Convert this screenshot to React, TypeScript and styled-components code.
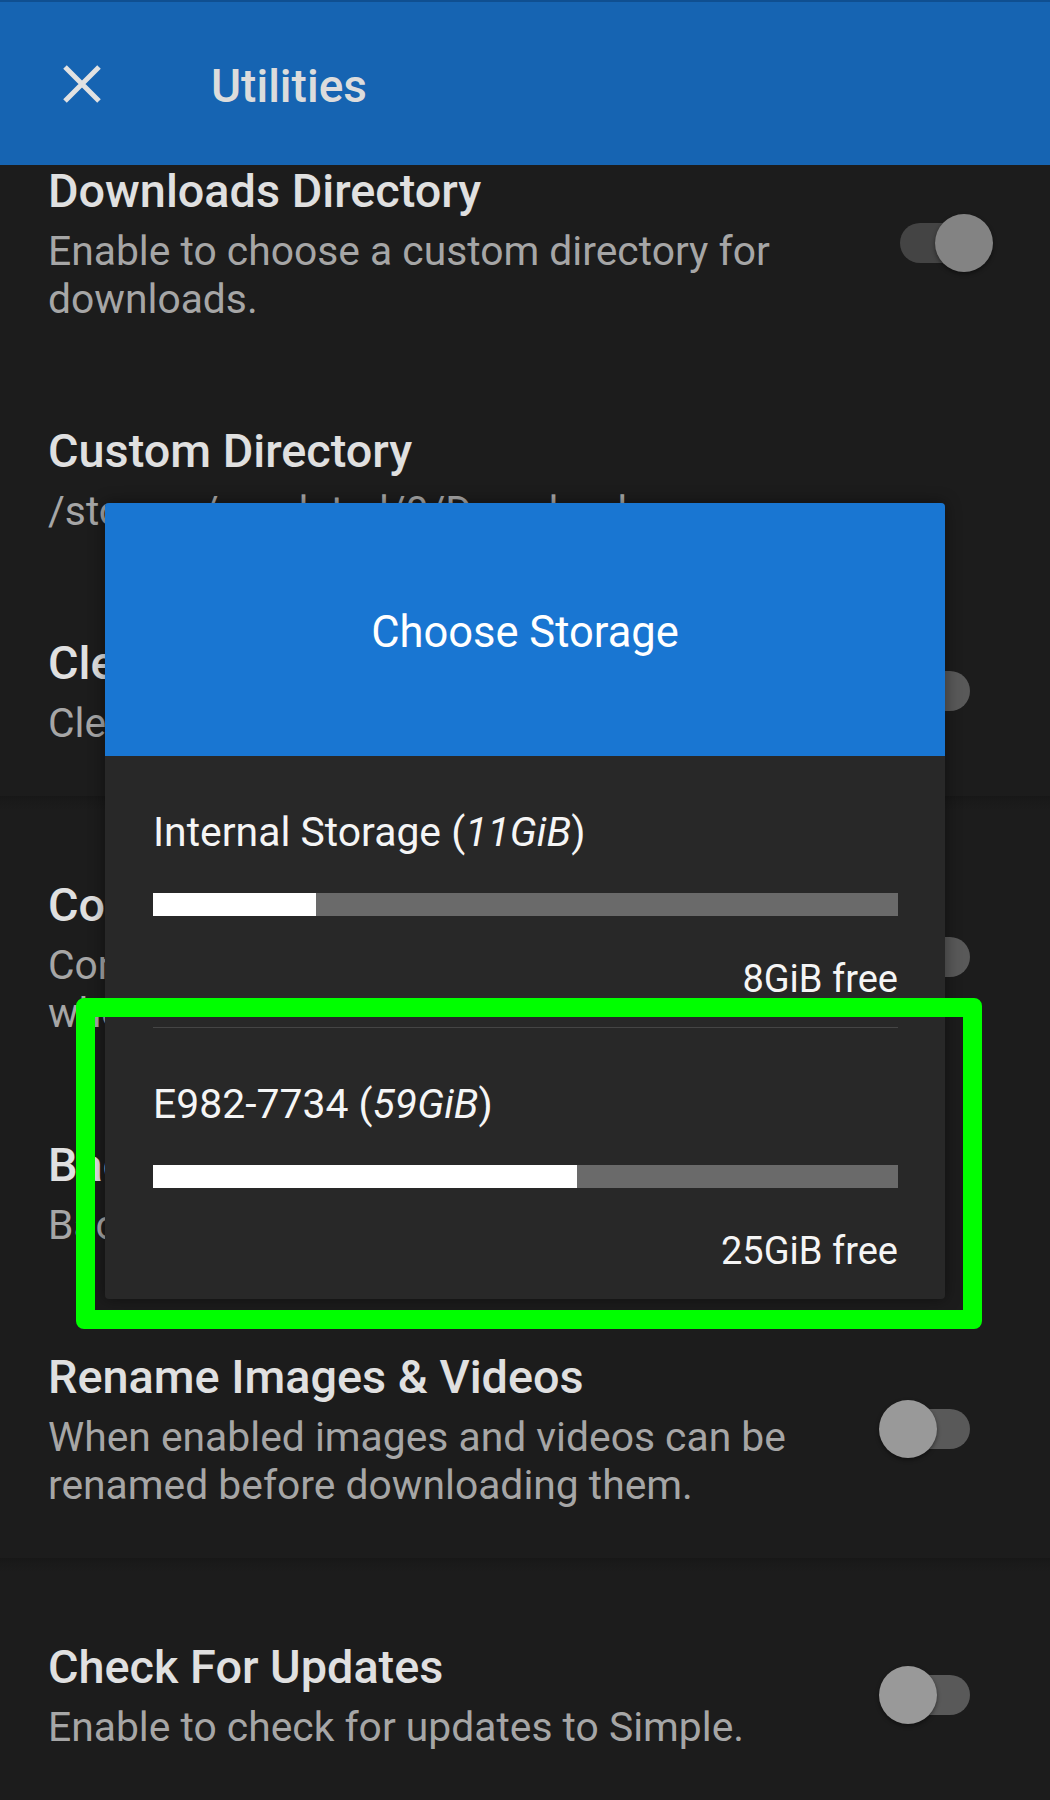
import React from "react";
import styled, { createGlobalStyle } from "styled-components";

const Global = createGlobalStyle`
  html, body { margin: 0; padding: 0; background: #1c1c1c; }
  body { font-family: Roboto, "Noto Sans", "Liberation Sans", sans-serif; }
  * { box-sizing: border-box; }
`;

const Screen = styled.div`
  position: relative;
  width: 1050px;
  height: 1800px;
  display: flex;
  flex-direction: column;
  overflow: hidden;
  background: #1c1c1c;
`;

const AppBar = styled.header`
  flex: none;
  height: 165px;
  border-top: 2px solid #0f4f91;
  background: #1664b2;
  display: flex;
  align-items: center;
  padding-left: 62px;
  gap: 109px;
`;

const CloseButton = styled.button`
  flex: none;
  width: 40px;
  height: 40px;
  padding: 0;
  border: 0;
  background: transparent;
  display: flex;
  color: #e2e2e2;
`;

const AppTitle = styled.h1`
  margin: 0;
  padding-top: 4px;
  font-size: 46px;
  font-weight: 500;
  line-height: 1;
  color: #dcdcdc;
`;

const ScrollArea = styled.main`
  flex: 1;
  overflow: hidden;
`;

const ScrollContent = styled.div`
  margin-top: -83px;
`;

const Section = styled.section`
  padding-top: 30px;
  background: #1c1c1c;
  & + & {
    background: linear-gradient(to bottom, #171717 0, #1a1a1a 6px, #1c1c1c 14px);
  }
`;

const Row = styled.div`
  display: flex;
  align-items: center;
  gap: 40px;
  padding: 50px 57px 49px 48px;
`;

const TextCol = styled.div`
  flex: 1;
  min-width: 0;
  padding-right: 154px;
  &:has(+ div) {
    padding-right: 0;
  }
`;

const RowTitle = styled.div`
  font-size: 46.8px;
  font-weight: 500;
  line-height: 58px;
  color: #e0e0e0;
  margin-bottom: 7px;
  white-space: nowrap;
`;

const RowDesc = styled.div`
  font-size: 40.8px;
  line-height: 48px;
  color: #a6a6a6;
  white-space: pre-line;
`;

const Switch = styled.div`
  flex: none;
  position: relative;
  width: 114px;
  height: 58px;
`;

const Track = styled.div<{ $on: boolean }>`
  position: absolute;
  left: 21px;
  top: 9px;
  width: 70px;
  height: 40px;
  border-radius: 20px;
  background: ${(p) => (p.$on ? "#444444" : "#595959")};
`;

const Knob = styled.div<{ $on: boolean }>`
  position: absolute;
  top: 0;
  left: ${(p) => (p.$on ? "56px" : "0")};
  width: 58px;
  height: 58px;
  border-radius: 50%;
  background: ${(p) => (p.$on ? "#838383" : "#999999")};
  box-shadow: 0 2px 4px rgba(0, 0, 0, 0.45);
`;

const Dialog = styled.div`
  position: absolute;
  left: 105px;
  top: 503px;
  width: 840px;
  border-radius: 4px;
  overflow: hidden;
  background: #282828;
  box-shadow: 0 0 16px rgba(0, 0, 0, 0.45);
`;

const DialogHeader = styled.div`
  height: 253px;
  padding-top: 7px;
  background: #1976d2;
  display: flex;
  align-items: center;
  justify-content: center;
  font-size: 43.5px;
  line-height: 1;
  color: #ffffff;
`;

const StorageItem = styled.div`
  height: 271px;
  padding: 52px 47px 0 48px;
  display: flex;
  flex-direction: column;
`;

const StorageName = styled.div`
  font-size: 40.9px;
  line-height: 48px;
  color: #f5f5f5;
  em { font-style: italic; }
`;

const Bar = styled.div`
  margin-top: 37px;
  height: 23px;
  background: #6a6a6a;
  display: flex;
`;

const BarFill = styled.div`
  height: 100%;
  background: #ffffff;
`;

const FreeText = styled.div`
  margin-top: 40px;
  font-size: 38px;
  line-height: 46px;
  text-align: right;
  color: #f5f5f5;
`;

const Divider = styled.div`
  height: 1px;
  margin: 0 47px 0 48px;
  background: #454545;
`;

const Highlight = styled.div`
  position: absolute;
  left: 76px;
  top: 998px;
  width: 906px;
  height: 331px;
  border: 19px solid #00ff00;
  border-radius: 8px;
  pointer-events: none;
`;

type Setting = { title: string; desc: string; toggle?: boolean; on?: boolean };

const sections: Setting[][] = [
  [
    {
      title: "Downloads Directory",
      desc: "Enable to choose a custom directory for downloads.",
      toggle: true,
      on: true,
    },
    { title: "Custom Directory", desc: "/storage/emulated/0/Download" },
    { title: "Clear Cache", desc: "Clear the cache on exit.", toggle: true },
  ],
  [
    {
      title: "Compress Media",
      desc: "Compress images and videos\nwhen downloading them.",
      toggle: true,
    },
    { title: "Backup Settings", desc: "Backup settings to a file." },
    {
      title: "Rename Images & Videos",
      desc: "When enabled images and videos can be renamed before downloading them.",
      toggle: true,
    },
  ],
  [
    {
      title: "Check For Updates",
      desc: "Enable to check for updates to Simple.",
      toggle: true,
    },
  ],
];

const storages = [
  { name: "Internal Storage", size: "11GiB", used: 21.9, free: "8GiB free" },
  { name: "E982-7734", size: "59GiB", used: 56.9, free: "25GiB free" },
];

function CloseIcon() {
  return (
    <svg width="40" height="40" viewBox="0 0 40 40" fill="none">
      <path d="M3 3 L37 37 M37 3 L3 37" stroke="currentColor" strokeWidth="5" />
    </svg>
  );
}

export default function App() {
  return (
    <>
      <Global />
      <Screen>
        <AppBar>
          <CloseButton aria-label="Close">
            <CloseIcon />
          </CloseButton>
          <AppTitle>Utilities</AppTitle>
        </AppBar>
        <ScrollArea>
          <ScrollContent>
            {sections.map((rows, si) => (
              <Section key={si}>
                {rows.map((r) => (
                  <Row key={r.title}>
                    <TextCol>
                      <RowTitle>{r.title}</RowTitle>
                      <RowDesc>{r.desc}</RowDesc>
                    </TextCol>
                    {r.toggle && (
                      <Switch>
                        <Track $on={!!r.on} />
                        <Knob $on={!!r.on} />
                      </Switch>
                    )}
                  </Row>
                ))}
              </Section>
            ))}
          </ScrollContent>
        </ScrollArea>

        <Dialog>
          <DialogHeader>Choose Storage</DialogHeader>
          {storages.map((s, i) => (
            <React.Fragment key={s.name}>
              {i > 0 && <Divider />}
              <StorageItem>
                <StorageName>
                  {s.name} (<em>{s.size}</em>)
                </StorageName>
                <Bar>
                  <BarFill style={{ width: `${s.used}%` }} />
                </Bar>
                <FreeText>{s.free}</FreeText>
              </StorageItem>
            </React.Fragment>
          ))}
        </Dialog>

        <Highlight />
      </Screen>
    </>
  );
}
